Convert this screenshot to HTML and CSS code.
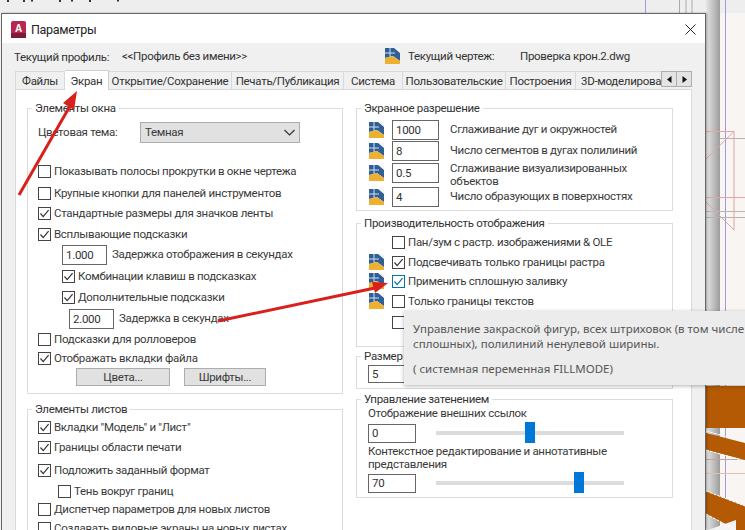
FILE: index.html
```html
<!DOCTYPE html>
<html lang="ru">
<head>
<meta charset="utf-8">
<title>Параметры</title>
<link rel="stylesheet" href="styles.css">
</head>
<body>
<svg class="sprites" width="0" height="0" aria-hidden="true">
  <symbol id="tick" viewBox="0 0 13 13"><path d="M2.5 6.5 5.2 9.6 10.6 3.2" fill="none" stroke="#333" stroke-width="1.2"/></symbol>
  <symbol id="tick-blue" viewBox="0 0 13 13"><path d="M2.5 6.5 5.2 9.6 10.6 3.2" fill="none" stroke="#0a6fb5" stroke-width="1.2"/></symbol>
  <symbol id="dwg" viewBox="0 0 15 16">
    <rect width="15" height="16" fill="#f4f4f4"/>
    <polygon points="0,0 9,0 15,5 15,13 8,8 0,10" fill="#2f5f96"/>
    <polygon points="0,10 8,8 15,13 15,16 0,16" fill="#eeb030"/>
    <path d="M0 5H10M5 0V9" stroke="#cfe0f0" stroke-width="1"/>
  </symbol>
</svg>
<div class="screen">
  <svg class="backdrop" width="745" height="530" viewBox="0 0 745 530" aria-hidden="true">
    <defs>
      <linearGradient id="shade" x1="0" x2="1" y1="0" y2="0"><stop offset="0" stop-color="#e6e6e6"/><stop offset="1" stop-color="#a8a8a8"/></linearGradient>
    </defs>
    <rect width="745" height="530" fill="#f8f5f3"/>
    <rect width="745" height="13" fill="#eeeeee"/>
    <path d="M8 0V2M24 0V2M32 0V1.500M60 0V2M72 0V1.500M90 0V2M118 0V1.500" stroke="#333" stroke-width="2"/>
    <path d="M645.500 0V13M725.500 0V530" stroke="#9c9cdc" fill="none"/>
    <path d="M679.500 0V13M686 0V13M692 0V13" stroke="#aaa" stroke-width="1" fill="none"/>
    <rect x="706" y="0" width="12" height="530" fill="url(#shade)"/>
    <rect x="718" y="0" width="2" height="530" fill="#a0a0a0"/>
    <path d="M720 138.500H745M706 211.500H745M706 217.500H745" stroke="#b5b5b5" fill="none"/>
    <path d="M706 131.500H734M706 159 734 131.500V230M706 202 734 230M706 197.500H745" stroke="#e2a5a5" fill="none"/>
    <path d="M706 459.500H745" stroke="#c8a58c" fill="none"/>
    <path d="M706 473.500H745" stroke="#e2c0aa" fill="none"/>
    <polygon points="706,386 745,386 745,428 706,428" fill="#b45a05"/>
    <polygon points="706,433 745,443 745,460 706,450" fill="#b45a05"/>
    <path d="M706 431 745 442M706 450 745 461" stroke="#fff" stroke-dasharray="3 1" fill="none"/>
    <polygon points="706,491 745,506 745,530 736,530 706,514" fill="#b45a05"/>
    <polygon points="736,520 708,530 736,530" fill="#f4f4f4"/>
    <path d="M706 491 745 506M706 514 736 530" stroke="#fff" stroke-dasharray="3 1" fill="none"/>
  </svg>

  <main class="dialog">
    <header class="titlebar">
      <svg class="logo" width="15" height="17" viewBox="0 0 15 17" aria-hidden="true">
        <rect width="15" height="17" rx="2" fill="#b9264f"/>
        <rect y="12" width="15" height="5" fill="#7b1b3a"/>
        <text x="7.500" y="10.500" text-anchor="middle" class="logo-a">A</text>
      </svg>
      <span class="title">Параметры</span>
      <svg class="close" width="11" height="11" viewBox="0 0 11 11" aria-hidden="true"><path d="M.5.5 10.500 10.500M10.500.5 .5 10.500" stroke="#222" fill="none"/></svg>
    </header>

    <div class="profile">
      <span class="profile-label">Текущий профиль:</span>
      <span class="profile-name">&lt;&lt;Профиль без имени&gt;&gt;</span>
      <svg class="icon profile-icon"><use href="#dwg"/></svg>
      <span class="drawing-label">Текущий чертеж:</span>
      <span class="drawing-name">Проверка крон.2.dwg</span>
    </div>

    <nav class="tabs">
      <span class="tab tab-files">Файлы</span>
      <span class="tab tab-active">Экран</span>
      <span class="tab tab-open">Открытие/Сохранение</span>
      <span class="tab tab-print">Печать/Публикация</span>
      <span class="tab tab-system">Система</span>
      <span class="tab tab-user">Пользовательские</span>
      <span class="tab tab-build">Построения</span>
      <span class="tab tab-3d">3D-моделирова</span>
      <span class="scroll">
        <span class="scroll-btn"><svg width="5" height="7" viewBox="0 0 5 7"><path d="M4.500 0V7L0 3.500Z" fill="#111"/></svg></span>
        <span class="scroll-btn"><svg width="5" height="7" viewBox="0 0 5 7"><path d="M.5 0V7L5 3.500Z" fill="#111"/></svg></span>
      </span>
    </nav>

    <section class="panel">
      <div class="col">
        <fieldset class="group group-window">
          <legend>Элементы окна</legend>
          <div class="row mt8">
            <span class="theme-label">Цветовая тема:</span>
            <span class="select">Темная<svg width="11" height="7" viewBox="0 0 11 7"><path d="M.5 1 5.500 6 10.500 1" fill="none" stroke="#333" stroke-width="1.200"/></svg></span>
          </div>
          <div class="row mt21"><span class="box"></span><span class="lbl">Показывать полосы прокрутки в окне чертежа</span></div>
          <div class="row mt4"><span class="box"></span><span class="lbl">Крупные кнопки для панелей инструментов</span></div>
          <div class="row mt2"><span class="box"><svg><use href="#tick"/></svg></span><span class="lbl">Стандартные размеры для значков ленты</span></div>
          <div class="row mt3"><span class="box"><svg><use href="#tick"/></svg></span><span class="lbl">Всплывающие подсказки</span></div>
          <div class="row mt3 indent-24"><span class="field field-45">1.000</span><span class="after-field">Задержка отображения в секундах</span></div>
          <div class="row mt3 indent-24"><span class="box"><svg><use href="#tick"/></svg></span><span class="lbl">Комбинации клавиш в подсказках</span></div>
          <div class="row mt3 indent-24"><span class="box"><svg><use href="#tick"/></svg></span><span class="lbl">Дополнительные подсказки</span></div>
          <div class="row mt4 indent-31"><span class="field field-45">2.000</span><span class="after-field">Задержка в секундах</span></div>
          <div class="row mt2"><span class="box"></span><span class="lbl">Подсказки для ролловеров</span></div>
          <div class="row mt1"><span class="box"><svg><use href="#tick"/></svg></span><span class="lbl">Отображать вкладки файла</span></div>
          <div class="row mt1 buttons"><span class="btn btn-colors">Цвета...</span><span class="btn btn-fonts">Шрифты...</span></div>
        </fieldset>

        <fieldset class="group group-sheets">
          <legend>Элементы листов</legend>
          <div class="row mt2"><span class="box"><svg><use href="#tick"/></svg></span><span class="lbl">Вкладки "Модель" и "Лист"</span></div>
          <div class="row mt2"><span class="box"><svg><use href="#tick"/></svg></span><span class="lbl">Границы области печати</span></div>
          <div class="row mt5"><span class="box"><svg><use href="#tick"/></svg></span><span class="lbl">Подложить заданный формат</span></div>
          <div class="row mt3 indent-20"><span class="box"></span><span class="lbl">Тень вокруг границ</span></div>
          <div class="row mt0"><span class="box"></span><span class="lbl">Диспетчер параметров для новых листов</span></div>
          <div class="row mt1"><span class="box"></span><span class="lbl">Создавать видовые экраны на новых листах</span></div>
        </fieldset>
      </div>

      <div class="col">
        <fieldset class="group group-res">
          <legend>Экранное разрешение</legend>
          <div class="res-row mt5"><svg class="icon"><use href="#dwg"/></svg><span class="field field-47">1000</span><span class="res-lbl">Сглаживание дуг и окружностей</span></div>
          <div class="res-row mt1"><svg class="icon"><use href="#dwg"/></svg><span class="field field-47">8</span><span class="res-lbl">Число сегментов в дугах полилиний</span></div>
          <div class="res-row mt2"><svg class="icon"><use href="#dwg"/></svg><span class="field field-47">0.5</span><span class="res-lbl res-two">Сглаживание визуализированных объектов</span></div>
          <div class="res-row mt4"><svg class="icon"><use href="#dwg"/></svg><span class="field field-47">4</span><span class="res-lbl">Число образующих в поверхностях</span></div>
        </fieldset>

        <fieldset class="group group-perf">
          <legend>Производительность отображения</legend>
          <div class="perf-row mt3"><span class="icon-slot"></span><span class="box"></span><span class="lbl">Пан/зум с растр. изображениями &amp; OLE</span></div>
          <div class="perf-row mt2"><svg class="icon"><use href="#dwg"/></svg><span class="box"><svg><use href="#tick"/></svg></span><span class="lbl">Подсвечивать только границы растра</span></div>
          <div class="perf-row mt1"><svg class="icon"><use href="#dwg"/></svg><span class="box box-focus"><svg><use href="#tick-blue"/></svg></span><span class="lbl">Применить сплошную заливку</span></div>
          <div class="perf-row mt2"><svg class="icon"><use href="#dwg"/></svg><span class="box"></span><span class="lbl">Только границы текстов</span></div>
          <div class="perf-row mt3"><span class="icon-slot"></span><span class="box"></span></div>
        </fieldset>

        <fieldset class="group group-size">
          <legend>Размер перекрестия</legend>
          <div class="size-row"><span class="field field-60">5</span></div>
        </fieldset>

        <fieldset class="group group-shade">
          <legend>Управление затенением</legend>
          <div class="shade-text">Отображение внешних ссылок</div>
          <div class="shade-row shade-first"><span class="field field-48">0</span><span class="slider"><span class="thumb" style="left:47.3%"></span></span></div>
          <div class="shade-text shade-wrap">Контекстное редактирование и аннотативные представления</div>
          <div class="shade-row shade-last"><span class="field field-48">70</span><span class="slider"><span class="thumb" style="left:73.4%"></span></span></div>
        </fieldset>
      </div>
    </section>
  </main>

  <aside class="tooltip">
    <p>Управление закраской фигур, всех штриховок (в том числе сплошных), полилиний ненулевой ширины.</p>
    <p class="tooltip-var">( системная переменная FILLMODE)</p>
  </aside>

  <svg class="arrows" width="745" height="530" viewBox="0 0 745 530" aria-hidden="true">
    <path d="M19 195 70 106" stroke="#d8201c" stroke-width="3" fill="none"/>
    <polygon points="77,91 63,103 74,110" fill="#d8201c"/>
    <path d="M218 321 375 288" stroke="#d8201c" stroke-width="3" fill="none"/>
    <polygon points="388,283 372,282 375,293" fill="#d8201c"/>
  </svg>
</div>
</body>
</html>
```
FILE: styles.css
```css
* { box-sizing: border-box; }
html, body { margin: 0; padding: 0; }
body {
  font-family: Roboto, "Liberation Sans", sans-serif;
  font-size: 11.5px;
  letter-spacing: -.3px;
  color: #3a3a3a;
}
.sprites { position: absolute; }
.screen { position: relative; width: 745px; height: 530px; overflow: hidden; }
.backdrop, .arrows { position: absolute; left: 0; top: 0; }
.arrows { pointer-events: none; }

.dialog {
  position: relative;
  margin: 13px 0 0 1px;
  width: 705px;
  height: 517px;
  border: 1px solid #666;
  border-bottom: 0;
  background: #f0f0f0;
  box-shadow: 1px 0 2px rgba(0, 0, 0, .3);
}

.titlebar {
  display: flex;
  align-items: center;
  height: 29px;
  padding: 1px 9px 0 9px;
  background: #fff;
}
.logo { margin-right: 5px; flex: none; }
.logo-a { font: 700 10px "Liberation Sans", sans-serif; fill: #fff; letter-spacing: 0; }
.title { font-size: 12.5px; color: #222; flex: 1; }

.profile {
  display: flex;
  align-items: center;
  height: 26px;
  padding-left: 12px;
  color: #333;
  white-space: nowrap;
}
.profile-label { width: 108px; padding-top: 2px; }
.profile-name { width: 263px; }
.profile-icon { margin-right: 8px; }
.drawing-label { width: 112px; }

.tabs { display: flex; height: 20px; margin-left: 13px; align-items: flex-end; position: relative; }
.tab {
  display: flex;
  align-items: center;
  justify-content: center;
  height: 18px;
  border: 1px solid #d9d9d9;
  border-left: 0;
  border-bottom: 0;
  white-space: nowrap;
  overflow: hidden;
  color: #333;
}
.tab-files { width: 50px; border-left: 1px solid #d9d9d9; }
.tab-active {
  width: 44px;
  height: 20px;
  background: #fff;
  margin-bottom: -1px;
  position: relative;
  z-index: 1;
  border-top-color: #cfcfcf;
  border-right-color: #cfcfcf;
}
.tab-open { width: 123px; }
.tab-print { width: 112px; }
.tab-system { width: 59px; }
.tab-user { width: 103px; }
.tab-build { width: 70px; }
.tab-3d { width: 85px; justify-content: flex-start; padding-left: 5px; border-right: 0; }
.scroll { display: flex; height: 16px; align-self: center; margin-top: 0; }
.scroll-btn {
  display: flex;
  align-items: center;
  justify-content: center;
  width: 16px;
  height: 16px;
  background: #e4e4e4;
  border: 1px solid #adadad;
}
.scroll-btn + .scroll-btn { margin-left: -1px; }

.panel {
  display: grid;
  grid-template-columns: 316px 317px;
  column-gap: 13px;
  align-items: start;
  margin-left: 13px;
  width: 677px;
  height: 442px;
  padding: 11px 0 0 11px;
  background: #fff;
  border: 1px solid #d9d9d9;
  border-bottom: 0;
}
.col { display: flex; flex-direction: column; }

.group {
  margin: 0;
  padding: 0 0 0 10px;
  min-width: 0;
  border: 1px solid #dcdcdc;
}
.group legend {
  margin-left: -6px;
  padding: 0 3px;
  height: 14px;
  line-height: 14px;
  color: #333;
}
.group-window { height: 293px; }
.group-sheets { height: 140px; margin-top: 8px; }
.group-res { height: 110px; padding-left: 12px; }
.group-res legend { margin-left: -8px; }
.group-perf { height: 131px; margin-top: 5px; padding-left: 12px; }
.group-perf legend { margin-left: -8px; }
.group-size { height: 40px; margin-top: 2px; padding-left: 11px; }
.group-size legend { margin-left: -7px; }
.group-shade { height: 106px; margin-top: 3px; padding-left: 11px; }
.group-shade legend { margin-left: -7px; }

.row { display: flex; align-items: center; height: 18px; white-space: nowrap; }
.mt0 { margin-top: 0; }
.mt1 { margin-top: 1px; }
.mt2 { margin-top: 2px; }
.mt3 { margin-top: 3px; }
.mt4 { margin-top: 4px; }
.mt5 { margin-top: 5px; }
.mt8 { margin-top: 8px; }
.mt21 { margin-top: 21px; }
.indent-20 { padding-left: 20px; }
.indent-24 { padding-left: 24px; }
.indent-31 { padding-left: 31px; }

.theme-label { width: 102px; }
.select {
  display: flex;
  align-items: center;
  justify-content: space-between;
  width: 160px;
  height: 21px;
  padding: 0 4px 0 4px;
  background: #e1e1e1;
  border: 1px solid #adadad;
}

.box {
  flex: none;
  width: 13px;
  height: 13px;
  border: 1px solid #444;
  background: #fff;
  position: relative;
}
.box svg { display: block; width: 13px; height: 13px; margin: -1px; }
.box-focus { border-color: #0a6fb5; }
.lbl { margin-left: 3px; }

.field {
  flex: none;
  display: flex;
  align-items: center;
  height: 20px;
  padding-left: 3px;
  background: #fff;
  border: 1px solid #666;
  color: #333;
}
.res-row .field { margin-left: 8px; }
.field-45 { width: 45px; }
.field-47 { width: 47px; }
.field-48 { width: 48px; height: 19px; }
.field-60 { width: 60px; height: 18px; }
.after-field { margin-left: 5px; margin-top: -3px; }

.buttons { padding-left: 38px; }
.btn {
  display: flex;
  align-items: center;
  justify-content: center;
  height: 18px;
  background: #e1e1e1;
  border: 1px solid #adadad;
}
.btn-colors { width: 94px; margin-right: 14px; }
.btn-fonts { width: 82px; }

.icon { display: block; flex: none; width: 15px; height: 16px; }
.icon-slot { flex: none; width: 15px; }

.res-row { display: flex; align-items: center; height: 20px; }
.res-lbl { margin-left: 11px; width: 215px; line-height: 13px; margin-top: -2px; }
.res-two { margin-top: 3px; }

.perf-row { display: flex; align-items: center; height: 18px; white-space: nowrap; }
.perf-row .box { margin-left: 8px; }

.size-row { padding-top: 2px; }

.shade-text { line-height: 13px; margin-top: 1px; }
.shade-wrap { margin-top: 2px; width: 260px; }
.shade-row { display: flex; align-items: center; height: 20px; }
.shade-first { margin-top: 3px; }
.shade-last { margin-top: 2px; }
.slider { position: relative; width: 188px; height: 4px; margin-left: 20px; background: #dcdcdc; }
.thumb {
  position: absolute;
  top: -9px;
  width: 10px;
  height: 21px;
  background: #0078d7;
}

.tooltip {
  position: absolute;
  left: 404px;
  top: 311px;
  width: 360px;
  height: 74px;
  padding: 10px 0 0 9px;
  background: #ececec;
  box-shadow: 0 1px 4px rgba(0, 0, 0, .3);
  color: #555;
  font-family: "Noto Sans", sans-serif;
  font-size: 11.5px;
  letter-spacing: 0;
  line-height: 15px;
}
.tooltip p { margin: 0; width: 340px; }
.tooltip .tooltip-var { margin-top: 10px; }
```
